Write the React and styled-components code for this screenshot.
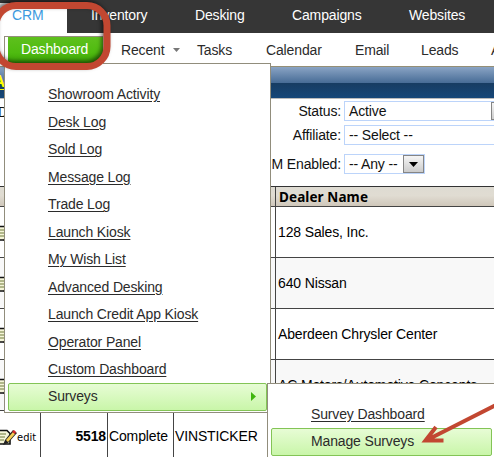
import React from "react";
import styled, { createGlobalStyle, css } from "styled-components";

const Global = createGlobalStyle`
  *, *::before, *::after { box-sizing: border-box; }
  body { margin: 0; background: #fff; overflow: hidden; }
`;

const Page = styled.div`
  position: relative;
  width: 494px;
  height: 457px;
  overflow: hidden;
  display: flex;
  flex-direction: column;
  background: #fff;
  color: #111;
  font: 14px/16px "Liberation Sans", Arial, sans-serif;
  letter-spacing: -0.14px;
  white-space: nowrap;
`;

const TopNav = styled.nav`
  flex: none;
  height: 33px;
  display: grid;
  grid-template-columns: 67px 104px 97px 117px 109px;
  padding-top: 3px;
  background: #363636;
  color: #fff;
`;

const TopTab = styled.a`
  padding: 4px 0 0 ${(p) => p.$inset || 24}px;
  ${(p) => p.$active && css`
    background: #fff;
    color: #3d9be0;
  `}
`;

const SubNav = styled.nav`
  flex: none;
  height: 33px;
  display: grid;
  grid-template-columns: 117px 76px 69px 89px 66px 70px 20px;
  color: #2b2b2b;
`;

const SubItem = styled.a`
  display: flex;
  align-items: center;
  gap: 8px;
  height: 33px;
  padding-left: 4px;
`;

const DashboardTab = styled.div`
  margin-left: 4px;
  height: 30px;
  width: 99px;
  margin-top: 3px;
  padding-left: 3px;
  border: solid #948f7c;
  border-width: 1px 0 0 1px;
`;

const DashboardLabel = styled.div`
  height: 26px;
  padding: 4px 0 0 13px;
  background: linear-gradient(#5ec01d, #4fbb10 60%, #3ba307);
  color: #fff;
`;

const Caret = styled.svg`
  width: 7px;
  height: 4px;
  fill: #777;
`;

const TitleBar = styled.div`
  flex: none;
  height: 33px;
  padding-top: 5px;
  border-top: 1px solid #958f76;
  border-bottom: 1px solid #bbb;
  background: linear-gradient(#8aa4c4 0, #476c96 16px, #173c62 16px, #16487a 32px);
`;

const TitleLink = styled.a`
  margin-left: -7px;
  font-weight: bold;
  font-size: 17px;
  line-height: 19px;
  color: #ff0;
  text-decoration: underline;
  text-underline-offset: 2px;
`;

const Filters = styled.form`
  flex: none;
  height: 87px;
  display: flex;
  padding-top: 2px;
`;

const FilterName = styled.span`
  flex: none;
  width: 240px;
  margin-left: -2px;
  padding-top: 3px;
`;

const FilterGrid = styled.div`
  flex: none;
  display: grid;
  grid-template-columns: 103px 170px;
  grid-template-rows: 20px 20px 20px;
  column-gap: 3px;
  row-gap: 4px;
  align-content: start;
  align-items: center;
`;

const FilterLabel = styled.label`
  text-align: right;
  margin-top: ${(p) => p.$drop || 0}px;
`;

const Select = styled.div`
  display: flex;
  justify-content: space-between;
  width: ${(p) => p.$width}px;
  height: 20px;
  margin-top: ${(p) => p.$drop || 0}px;
  padding-left: 4px;
  border: 1px solid #bcd4fa;
  line-height: 18px;
`;

const SelectButton = styled.span`
  display: flex;
  align-items: center;
  justify-content: center;
  width: 21px;
  border: 1px solid #858585;
  background: linear-gradient(#f5f5f5, #ccc);
`;

const Table = styled.div`
  flex: none;
  width: 494px;
`;

const Row = styled.div`
  display: grid;
  grid-template-columns: 41px 67px 66px 102px 1fr;
  height: 51px;
  border-bottom: 1px solid #444;
  background: ${(p) => (p.$odd ? "#f8f8f8" : "#fff")};
`;

const HeaderRow = styled(Row)`
  height: 21px;
  border-top: 1px solid #333;
  background: linear-gradient(#dedbd2, #e0dcd2 45%, #cfc7ba);
  font: bold 13.5px/19px "Noto Sans", sans-serif;
  letter-spacing: 0.1px;
`;

const Cell = styled.div`
  display: flex;
  align-items: center;
  padding-left: ${(p) => (p.$last ? 2 : 1)}px;
  overflow: hidden;
  color: #000;
  border-right: ${(p) => (p.$last ? "0" : "1px solid #444")};
  ${(p) => p.$id && css`
    justify-content: flex-end;
    padding-right: 1px;
    font-weight: bold;
  `}
`;

const HeaderCell = styled(Cell)`
  padding: 1px 0 0 3px;
`;

const EditCell = styled(Cell)`
  padding: 3px 0 0;
  font: 11px/16px "DejaVu Sans Condensed", "DejaVu Sans", sans-serif;
  letter-spacing: 0.05px;
`;

const EditIcon = styled.svg`
  flex: none;
  width: 17px;
  height: 17px;
`;

const Menu = styled.div`
  position: absolute;
  left: 4px;
  top: 63px;
  width: 267px;
  height: 350px;
  padding: 17px 3px 0;
  background: #fff;
  border: solid #918d7c;
  border-width: 0 1px 1px 1px;
`;

const MenuTopEdge = styled.div`
  height: 1px;
  margin: -17px -3px 16.5px 95px;
  background: #918d7c;
`;

const SubMenu = styled(Menu)`
  left: 267px;
  top: 383px;
  width: 240px;
  height: 90px;
  padding: 16px 3px 0;
  border-top-width: 1px;
`;

const MenuItem = styled.a`
  display: flex;
  align-items: center;
  justify-content: space-between;
  height: 27.5px;
  padding: 0 10px 0 40px;
  color: #2b2b2b;
  text-decoration: underline;
  text-underline-offset: 2px;
  ${(p) => p.$active && css`
    height: 28px;
    width: ${p.$width}px;
    padding: 0 10px 2px 39px;
    border: 1px solid #83c456;
    border-radius: 2px;
    background: linear-gradient(#e7fcd5, #c9f6a9);
    text-decoration: none;
  `}
`;

const Callouts = styled.svg`
  position: absolute;
  inset: 0;
  width: 494px;
  height: 457px;
  pointer-events: none;
`;

const Ring = styled.rect`
  fill: none;
  stroke: #c24731;
  stroke-width: 7px;
  filter: drop-shadow(-2px -2px 2px rgba(0, 0, 0, 0.55));
`;

const Arrow = styled.path`
  fill: none;
  stroke: #c24731;
  stroke-width: 4px;
`;

function Pencil() {
  return (
    <EditIcon viewBox="0 0 17 17">
      <path d="M-1 1.5H7L10 4.5V15H-1Z" fill="#f5f5d8" stroke="#111" strokeWidth="1.6" />
      <path d="M0 5H6M0 8H5M0 11H4" stroke="#6e7a3c" />
      <path d="M3 16L5 11L13 1L17 4L8 14Z" fill="#222" />
      <path d="M6 11L13 3L15 5L8 13Z" fill="#f3cd55" />
      <path d="M12 3L14 1L16 3L15 5Z" fill="#d72b2b" />
    </EditIcon>
  );
}

const links = [
  "Showroom Activity", "Desk Log", "Sold Log", "Message Log", "Trade Log", "Launch Kiosk",
  "My Wish List", "Advanced Desking", "Launch Credit App Kiosk", "Operator Panel", "Custom Dashboard",
];

const dealers = [
  { name: "128 Sales, Inc." },
  { name: "640 Nissan" },
  { name: "Aberdeen Chrysler Center" },
  { name: "AC Motors/Automotive Concepts" },
  { id: "5518", status: "Complete", vin: "VINSTICKER" },
];

export default function App() {
  return (
    <Page>
      <Global />
      <TopNav>
        <TopTab $active $inset={12}>CRM</TopTab>
        <TopTab>Inventory</TopTab>
        <TopTab>Desking</TopTab>
        <TopTab>Campaigns</TopTab>
        <TopTab>Websites</TopTab>
      </TopNav>
      <SubNav>
        <DashboardTab><DashboardLabel>Dashboard</DashboardLabel></DashboardTab>
        <SubItem>Recent <Caret viewBox="0 0 7 4"><path d="M0 0H7L3.5 4Z" /></Caret></SubItem>
        <SubItem>Tasks</SubItem>
        <SubItem>Calendar</SubItem>
        <SubItem>Email</SubItem>
        <SubItem>Leads</SubItem>
        <SubItem>A</SubItem>
      </SubNav>
      <TitleBar><TitleLink>A</TitleLink></TitleBar>
      <Filters>
        <FilterName>De</FilterName>
        <FilterGrid>
          <FilterLabel>Status:</FilterLabel>
          <Select $width={169}>Active<SelectButton /></Select>
          <FilterLabel>Affiliate:</FilterLabel>
          <Select $width={190}>-- Select --</Select>
          <FilterLabel $drop={10}>M Enabled:</FilterLabel>
          <Select $width={81} $drop={10}>
            -- Any --
            <SelectButton><svg width="9" height="5"><path d="M0 0H9L4.5 5Z" /></svg></SelectButton>
          </Select>
        </FilterGrid>
      </Filters>
      <Table>
        <HeaderRow>
          <HeaderCell /><HeaderCell /><HeaderCell /><HeaderCell />
          <HeaderCell $last>Dealer Name</HeaderCell>
        </HeaderRow>
        {dealers.map((d, i) => (
          <Row key={i} $odd={i === 1 || i === 3}>
            <EditCell><Pencil />edit</EditCell>
            <Cell $id>{d.id}</Cell>
            <Cell>{d.status}</Cell>
            <Cell>{d.vin}</Cell>
            <Cell $last>{d.name}</Cell>
          </Row>
        ))}
      </Table>
      <Menu>
        <MenuTopEdge />
        {links.map((l) => <MenuItem key={l}>{l}</MenuItem>)}
        <MenuItem $active $width={259}>
          Surveys
          <svg width="5" height="9"><path d="M0 0L5 4.5L0 9Z" fill="#3fb50c" /></svg>
        </MenuItem>
      </Menu>
      <SubMenu>
        <MenuItem>Survey Dashboard</MenuItem>
        <MenuItem $active $width={221}>Manage Surveys</MenuItem>
      </SubMenu>
      <Callouts>
        <Ring x="-4" y="5.5" width="111" height="61" rx="20" />
        <Arrow d="M497 404.5L427 440M436 427L425.5 440.5L443.5 440.5" />
      </Callouts>
    </Page>
  );
}
